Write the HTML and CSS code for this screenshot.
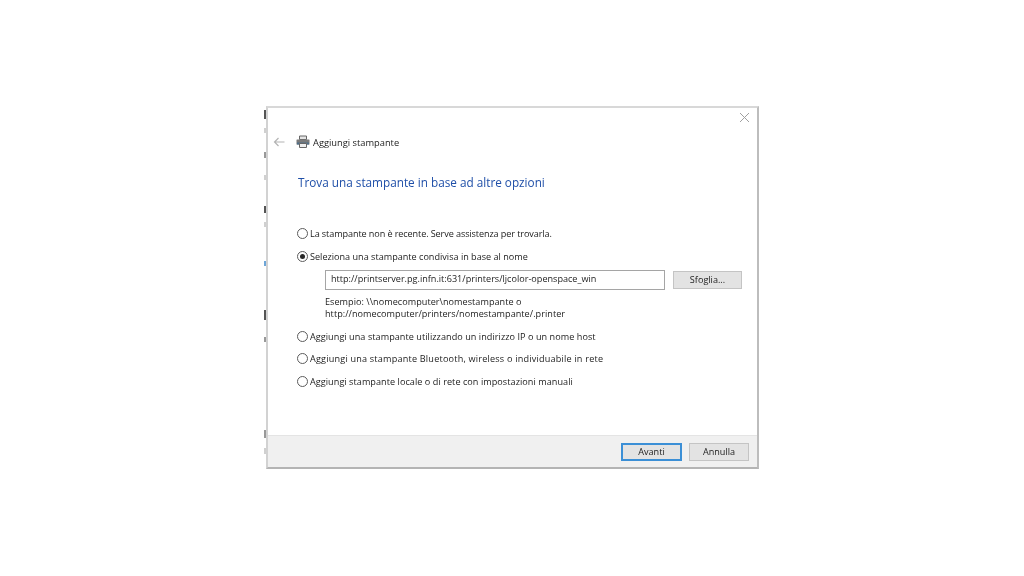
FILE: index.html
```html
<!doctype html>
<html lang="it">

<head>
    <meta charset="UTF-8">
    <title>Aggiungi stampante</title>
    <link rel="stylesheet" href="styles.css">
</head>

<body>
    <div class="desktop">
        <!-- resti del documento dietro la finestra -->
        <span class="scrap scrap-dark" style="top: 110px; height: 9px"></span>
        <span class="scrap" style="top: 128px; height: 5px"></span>
        <span class="scrap scrap-mid" style="top: 152px; height: 6px"></span>
        <span class="scrap" style="top: 175px; height: 5px"></span>
        <span class="scrap scrap-dark" style="top: 206px; height: 7px"></span>
        <span class="scrap" style="top: 222px; height: 5px"></span>
        <span class="scrap scrap-blue" style="top: 261px; height: 5px"></span>
        <span class="scrap scrap-dark" style="top: 310px; height: 10px"></span>
        <span class="scrap scrap-mid" style="top: 337px; height: 5px"></span>
        <span class="scrap scrap-mid" style="top: 430px; height: 8px"></span>
        <span class="scrap" style="top: 448px; height: 6px"></span>

        <div class="dialog">
            <svg class="close" width="11" height="11" viewBox="0 0 11 11">
                <path d="M1 1l9 9M10 1l-9 9" stroke="#a0a0a0" stroke-width="1" fill="none" />
            </svg>
            <div class="main">
                <div class="titlebar">
                    <svg class="back" width="12" height="10" viewBox="0 0 12 10">
                        <path d="M11.5 5H1.5M5.500 1L1.500 5l4 4" stroke="#b4b4b4" stroke-width="1.200" fill="none" />
                    </svg>
                    <svg class="printer" width="14" height="14" viewBox="0 0 14 14">
                        <path d="M3.500 1h7v3.500h-7z" fill="#e4e4e4" stroke="#666" />
                        <path d="M1 4.500h12a.5.5 0 0 1 .5.5v4.500H.5V5a.5.5 0 0 1 .5-.5z" fill="#7a7a7a" />
                        <path d="M1 7.500h12v2H1z" fill="#4f6f88" />
                        <path d="M3.500 8.500h7v4h-7z" fill="#eee" stroke="#666" />
                    </svg>
                    <span class="titletext">Aggiungi stampante</span>
                </div>

                <h1 class="heading">Trova una stampante in base ad altre opzioni</h1>

                <div class="options">
                    <div class="option first">
                        <span class="radio"></span>
                        <span class="tight">La stampante non è recente. Serve assistenza per trovarla.</span>
                    </div>
                    <div class="option second">
                        <span class="radio checked"></span>
                        <span>Seleziona una stampante condivisa in base al nome</span>
                    </div>
                    <div class="shared">
                        <div class="pathrow">
                            <div class="pathinput">http://printserver.pg.infn.it:631/printers/ljcolor-openspace_win</div>
                            <div class="btn browse">Sfoglia...</div>
                        </div>
                        <div class="hint">Esempio: \\nomecomputer\nomestampante o<br>http://nomecomputer/printers/nomestampante/.printer</div>
                    </div>
                    <div class="option">
                        <span class="radio"></span>
                        <span class="loose">Aggiungi una stampante utilizzando un indirizzo IP o un nome host</span>
                    </div>
                    <div class="option first">
                        <span class="radio"></span>
                        <span class="wide">Aggiungi una stampante Bluetooth, wireless o individuabile in rete</span>
                    </div>
                    <div class="option">
                        <span class="radio"></span>
                        <span class="loose">Aggiungi stampante locale o di rete con impostazioni manuali</span>
                    </div>
                </div>
            </div>
            <div class="footer">
                <div class="btn default">Avanti</div>
                <div class="btn">Annulla</div>
            </div>
        </div>
    </div>
</body>

</html>
```

FILE: styles.css
```css
body {
    margin: 0;
    background: #fff;
    font-family: "Open Sans", "Noto Sans", sans-serif;
    font-size: 9.1px;
    color: #222;
}

.desktop {
    position: relative;
    width: 1024px;
    height: 576px;
    overflow: hidden;
}

.scrap {
    position: absolute;
    left: 264px;
    width: 2px;
    background: #d0d0d0;
}

.scrap-mid {
    background: #999;
}

.scrap-dark {
    background: #555;
}

.scrap-blue {
    background: #6ea6d8;
}

/* Finestra */

.dialog {
    position: absolute;
    left: 266px;
    top: 106px;
    width: 493px;
    height: 363px;
    box-sizing: border-box;
    border-right: 2px solid #bdbdbd;
    border-bottom: 2px solid #b4b4b4;
    border-left: 2px solid #d2d2d2;
    border-top: 2px solid #d8d8d8;
    background: #fff;
    display: flex;
    flex-direction: column;
    filter: blur(0.3px);
}

.close {
    position: absolute;
    top: 4px;
    right: 7px;
}

.main {
    flex: 1;
    padding-left: 5px;
}

.titlebar {
    display: flex;
    align-items: center;
    height: 14px;
    margin-top: 27px;
}

.printer {
    margin-left: 11px;
    margin-right: 3px;
}

.titletext {
    font-size: 9.3px;
}

.heading {
    margin: 25px 0 0 25px;
    font-size: 11.75px;
    line-height: 16px;
    font-weight: 400;
    color: #1f4fa8;
}

.options {
    margin: 36px 0 0 24px;
}

.option {
    display: flex;
    align-items: center;
    gap: 2px;
    height: 14px;
    margin-bottom: 8px;
}

.first {
    margin-bottom: 9px;
}

.second {
    margin-bottom: 7px;
}

.tight {
    letter-spacing: -0.1px;
}

.loose {
    letter-spacing: 0.05px;
}

.wide {
    letter-spacing: 0.2px;
}

.radio {
    width: 9px;
    height: 9px;
    border: 1px solid #5c5c5c;
    border-radius: 50%;
    background: #fff;
    position: relative;
    flex: none;
}

.radio.checked::after {
    content: "";
    position: absolute;
    left: 2px;
    top: 2px;
    width: 5px;
    height: 5px;
    border-radius: 50%;
    background: #2a2a2a;
}

.shared {
    margin: 0 0 9px 28px;
}

.pathrow {
    display: flex;
    align-items: center;
    gap: 8px;
}

.pathinput {
    width: 340px;
    height: 20px;
    box-sizing: border-box;
    border: 1px solid #a5a5a5;
    padding-left: 5px;
    line-height: 16px;
}

.hint {
    margin-top: 6px;
    line-height: 12px;
    letter-spacing: 0.04px;
}

.btn {
    width: 69px;
    height: 18px;
    box-sizing: border-box;
    border: 1px solid #c4c4c4;
    background: #e3e3e3;
    text-align: center;
    line-height: 16px;
}

.browse {
    line-height: 15px;
}

.footer {
    height: 31px;
    border-top: 1px solid #e4e4e4;
    background: #f0f0f0;
    display: flex;
    justify-content: flex-end;
    align-items: center;
    gap: 7px;
    padding-right: 8px;
}

.default {
    width: 61px;
    border: 2px solid #3b8fd6;
    line-height: 14px;
}

.footer .btn:last-child {
    width: 60px;
}
```
